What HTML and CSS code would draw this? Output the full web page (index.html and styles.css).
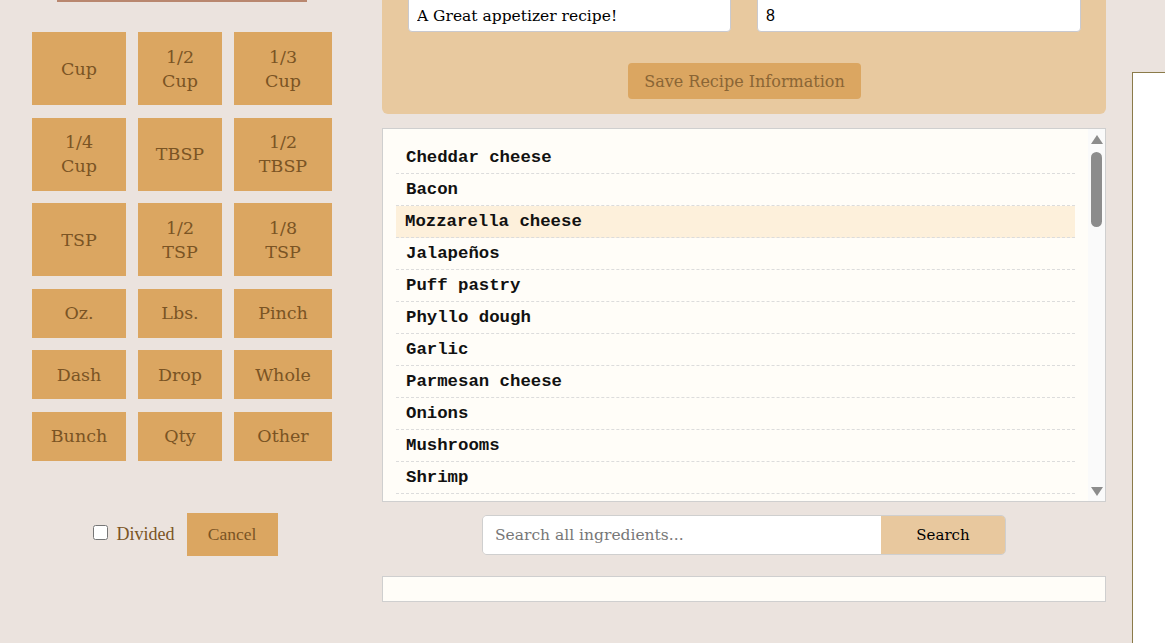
FILE: index.html
```html
<!DOCTYPE html>
<html>
<head>
<meta charset="utf-8">
<link rel="stylesheet" href="styles.css">
</head>
<body>
<div class="page">
  <div class="left">
    <div class="topline"></div>
    <div class="units">
      <button class="unit">Cup</button>
      <button class="unit">1/2<br>Cup</button>
      <button class="unit">1/3<br>Cup</button>
      <button class="unit">1/4<br>Cup</button>
      <button class="unit">TBSP</button>
      <button class="unit">1/2<br>TBSP</button>
      <button class="unit">TSP</button>
      <button class="unit">1/2<br>TSP</button>
      <button class="unit">1/8<br>TSP</button>
      <button class="unit short">Oz.</button>
      <button class="unit short">Lbs.</button>
      <button class="unit short">Pinch</button>
      <button class="unit short">Dash</button>
      <button class="unit short">Drop</button>
      <button class="unit short">Whole</button>
      <button class="unit short">Bunch</button>
      <button class="unit short">Qty</button>
      <button class="unit short">Other</button>
    </div>
    <div class="actions">
      <label class="divided"><input type="checkbox" class="check"> Divided</label>
      <button class="cancel">Cancel</button>
    </div>
  </div>
  <div class="right">
    <div class="recipe-form">
      <div class="fields">
        <input class="field desc" type="text" value="A Great appetizer recipe!">
        <input class="field serves" type="text" value="8">
      </div>
      <button class="save">Save Recipe Information</button>
    </div>
    <div class="list">
      <div class="list-view">
        <ul class="ingredients">
          <li>Cheddar cheese</li>
          <li>Bacon</li>
          <li class="hl">Mozzarella cheese</li>
          <li>Jalapeños</li>
          <li>Puff pastry</li>
          <li>Phyllo dough</li>
          <li>Garlic</li>
          <li>Parmesan cheese</li>
          <li>Onions</li>
          <li>Mushrooms</li>
          <li>Shrimp</li>
        </ul>
      </div>
      <div class="scrollbar">
        <div class="arrow up"></div>
        <div class="track"><div class="thumb"></div></div>
        <div class="arrow down"></div>
      </div>
    </div>
    <form class="search">
      <input class="search-input" type="text" placeholder="Search all ingredients...">
      <button class="search-btn" type="button">Search</button>
    </form>
    <div class="status"></div>
  </div>
  <div class="preview"></div>
</div>
</body>
</html>
```

FILE: styles.css
```css
html, body {
  margin: 0;
  padding: 0;
  background: #ebe3de;
  overflow: hidden;
  height: 643px;
}
.page {
  display: flex;
  align-items: flex-start;
  width: 1165px;
  height: 643px;
  overflow: hidden;
}
.left {
  width: 364px;
  flex: none;
  display: flex;
  flex-direction: column;
  align-items: center;
}
.topline {
  width: 250px;
  height: 2px;
  background: #b9876f;
}
.units {
  margin-top: 30px;
  display: grid;
  grid-template-columns: 94px 84px 98px;
  grid-auto-rows: 73px 73px 73px 49px 49px 49px;
  column-gap: 12px;
  row-gap: 12.6px;
  width: 300px;
}
.unit {
  border: none;
  margin: 0;
  padding: 0;
  background: #dba661;
  color: #7a5424;
  font-family: "DejaVu Serif", serif;
  font-size: 17.5px;
  line-height: 24px;
  text-align: center;
}
.actions {
  margin-top: 52px;
  display: flex;
  align-items: center;
  gap: 12px;
  margin-left: 6px;
}
.divided {
  display: flex;
  align-items: center;
  font-family: "Liberation Serif", serif;
  font-size: 18px;
  color: #7a5424;
  gap: 4px;
}
.check {
  margin: 0 5px 4px 0;
  width: 15px;
  height: 15px;
}
.cancel {
  border: none;
  background: #dba661;
  width: 91px;
  height: 43px;
  color: #7a5424;
  font-family: "Liberation Serif", serif;
  font-size: 17.5px;
}
.right {
  width: 724px;
  flex: none;
  margin-left: 18px;
  display: flex;
  flex-direction: column;
}
.recipe-form {
  background: #e8c99f;
  border-radius: 0 0 6px 6px;
  margin-top: -12px;
  padding: 0 25px 15px 26px;
  display: flex;
  flex-direction: column;
  align-items: center;
}
.fields {
  display: flex;
  gap: 26px;
  width: 100%;
}
.field {
  box-sizing: border-box;
  height: 44px;
  border: 1px solid #c9c9cf;
  border-radius: 4px;
  background: #fff;
  padding: 12px 8px 0;
  margin: 0;
  font-size: 16px;
  color: #000;
  outline: none;
}
.desc {
  width: 323px;
  font-family: "DejaVu Serif", serif;
  font-size: 15.5px;
}
.serves {
  width: 324px;
  font-family: "Liberation Sans", Arial, sans-serif;
}
.save {
  margin-top: 31px;
  width: 233px;
  height: 36px;
  border: none;
  border-radius: 4px;
  background: #dba661;
  color: #8a6535;
  font-family: "DejaVu Serif", serif;
  font-size: 16px;
  padding: 0;
}
.list {
  margin-top: 14px;
  box-sizing: border-box;
  height: 374px;
  border: 1px solid #cfcfcf;
  background: #fffdf8;
  display: flex;
}
.list-view {
  flex: 1;
  overflow: hidden;
}
.scrollbar {
  width: 17px;
  flex: none;
  background: #fafafa;
  display: flex;
  flex-direction: column;
  align-items: center;
}
.arrow {
  width: 0;
  height: 0;
  border-left: 6px solid transparent;
  border-right: 6px solid transparent;
}
.arrow.up {
  margin-top: 6px;
  border-bottom: 9px solid #8c8c8c;
}
.arrow.down {
  margin-bottom: 5px;
  border-top: 9px solid #8c8c8c;
}
.track {
  flex: 1;
  width: 100%;
  display: flex;
  flex-direction: column;
  align-items: center;
  padding-top: 8px;
}
.thumb {
  width: 11px;
  height: 75px;
  border-radius: 6px;
  background: #8c8c8c;
}
.ingredients {
  list-style: none;
  margin: 0;
  padding: 13px 13px 0 13px;
}
.ingredients li {
  height: 31px;
  line-height: 31px;
  border-bottom: 1px dashed #dcdcdc;
  padding-left: 10px;
  font-family: "Liberation Mono", "Courier New", monospace;
  font-weight: bold;
  font-size: 17.33px;
  color: #111;
}
.ingredients li.hl {
  background: #fdf0db;
  padding-left: 9px;
}
.search {
  margin: 13px auto 0;
  display: flex;
  width: 524px;
  height: 40px;
  border: 1px solid #cfcfcf;
  border-radius: 5px;
  overflow: hidden;
  box-sizing: border-box;
}
.search-input {
  flex: 1;
  border: none;
  margin: 0;
  padding: 0 12px;
  background: #fff;
  font-family: "DejaVu Serif", serif;
  font-size: 15.5px;
  outline: none;
}
.search-input::placeholder {
  color: #777;
}
.search-btn {
  width: 124px;
  border: none;
  margin: 0;
  background: #e8c89e;
  color: #000;
  font-family: "DejaVu Serif", serif;
  font-size: 15px;
}
.status {
  margin-top: 21px;
  height: 26px;
  box-sizing: border-box;
  border: 1px solid #cfcfcf;
  background: #fffdf8;
}
.preview {
  flex: none;
  margin-left: 26px;
  margin-top: 72px;
  width: 200px;
  height: 700px;
  background: #fff;
  border: 1px solid #8b7b4a;
}
```
